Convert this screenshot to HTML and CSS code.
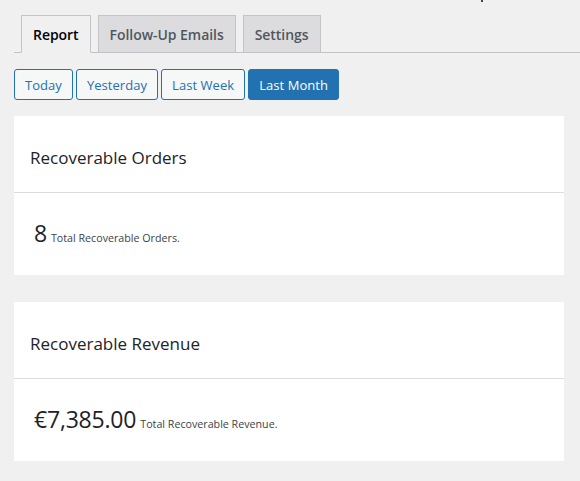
FILE: index.html
```html
<!DOCTYPE html>
<html lang="en">
<head>
<meta charset="utf-8">
<title>Report</title>
<link rel="stylesheet" href="styles.css">
</head>
<body>
<div class="wrap">
  <span class="cut-mark"></span>
  <nav class="nav-tabs">
    <a class="nav-tab active" href="#">Report</a>
    <a class="nav-tab" href="#">Follow-Up Emails</a>
    <a class="nav-tab" href="#">Settings</a>
  </nav>
  <div class="ranges">
    <a class="btn" href="#">Today</a>
    <a class="btn" href="#">Yesterday</a>
    <a class="btn" href="#">Last Week</a>
    <a class="btn btn-primary" href="#">Last Month</a>
  </div>
  <section class="card">
    <h2 class="card-title">Recoverable Orders</h2>
    <div class="card-body"><span class="stat">8</span><span class="stat-label">Total Recoverable Orders.</span></div>
  </section>
  <section class="card card-second">
    <h2 class="card-title">Recoverable Revenue</h2>
    <div class="card-body"><span class="stat">€7,385.00</span><span class="stat-label">Total Recoverable Revenue.</span></div>
  </section>
</div>
</body>
</html>
```
FILE: styles.css
```css
html, body {
  margin: 0;
  padding: 0;
  background: #f0f0f1;
}
body {
  font-family: "Open Sans", "Noto Sans", "Liberation Sans", sans-serif;
  color: #1d2327;
  width: 580px;
  height: 481px;
  overflow: hidden;
}
.wrap {
  position: relative;
  padding: 15px 0 0 14px;
}
.cut-mark {
  position: absolute;
  left: 481px;
  top: 0;
  width: 2px;
  height: 2px;
  background: #3c434a;
}
.nav-tabs {
  display: flex;
  gap: 7px;
  padding-left: 7px;
  border-bottom: 1px solid #c3c4c7;
  height: 37px;
  align-items: flex-end;
}
.nav-tab {
  box-sizing: border-box;
  height: 38px;
  margin-bottom: -1px;
  padding: 0 11px;
  display: flex;
  align-items: center;
  border: 1px solid #c3c4c7;
  background: #dcdcde;
  color: #50575e;
  font-size: 14px;
  font-weight: 600;
  letter-spacing: -0.05px;
  text-decoration: none;
}
.nav-tab.active {
  background: #f0f0f1;
  border-bottom-color: #f0f0f1;
  color: #000;
}
.ranges {
  display: flex;
  gap: 3px;
  margin-top: 16px;
}
.btn {
  box-sizing: border-box;
  height: 31px;
  padding: 0 10px;
  display: flex;
  align-items: center;
  border: 1px solid #2271b1;
  border-radius: 3px;
  background: #f6f7f7;
  color: #2271b1;
  font-size: 13px;
  letter-spacing: 0.05px;
  text-decoration: none;
}
.btn-primary {
  background: #2271b1;
  color: #fff;
}
.card {
  background: #fff;
  margin: 16px 16px 0 0;
}
.card-second {
  margin-top: 27px;
}
.card-title {
  box-sizing: border-box;
  margin: 0;
  height: 77px;
  padding: 30px 16px 0;
  font-size: 17px;
  font-weight: 500;
  line-height: 24px;
  letter-spacing: 0;
  border-bottom: 1px solid #dcdcde;
}
.card-body {
  box-sizing: border-box;
  height: 82px;
  padding: 24px 20px 0;
  display: flex;
  align-items: baseline;
  gap: 4px;
}
.stat {
  font-size: 23px;
  line-height: 32px;
  color: #1d2327;
  letter-spacing: -0.2px;
}
.stat-label {
  font-size: 10.7px;
  color: #3c434a;
}
```
